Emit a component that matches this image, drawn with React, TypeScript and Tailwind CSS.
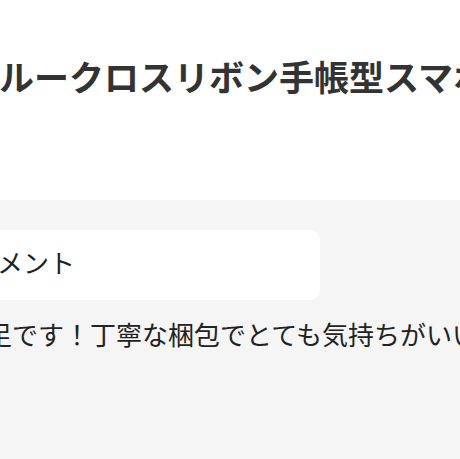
export default function App() {
  return (
    <div className="w-[460px] h-[459px] overflow-hidden bg-white font-['Noto_Sans_CJK_JP','Noto_Sans',sans-serif]">
      <div className="h-[200px] pt-[58px]">
        <h1 className="ml-[-36px] whitespace-nowrap text-[35px] font-bold leading-none text-[#333333]">
          ブルークロスリボン手帳型スマホケース
        </h1>
      </div>
      <div className="h-[259px] bg-[#f5f5f5] pt-[30px]">
        <div className="ml-[-48px] w-[368px] h-[70px] rounded-[10px] bg-white pl-[19px] pt-[19px]">
          <p className="whitespace-nowrap text-[26px] leading-none text-[#222222]">コメント</p>
        </div>
        <p className="ml-[-40px] mt-[21px] whitespace-nowrap text-[26px] leading-none text-[#222222]">
          満足です！丁寧な梱包でとても気持ちがいいです。
        </p>
      </div>
    </div>
  );
}
